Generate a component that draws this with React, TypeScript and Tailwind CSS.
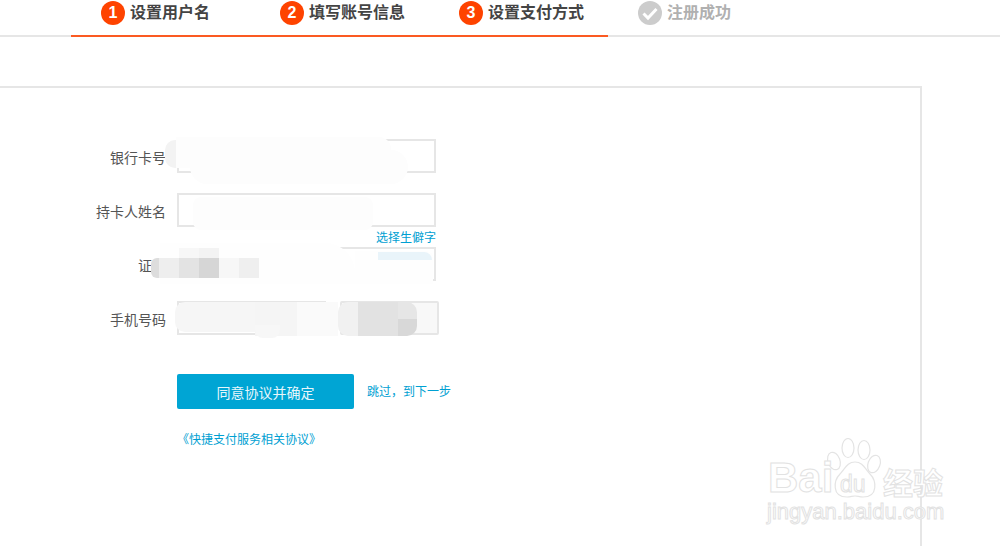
const steps = [
  { num: '1', label: '设置用户名', done: true },
  { num: '2', label: '填写账号信息', done: true },
  { num: '3', label: '设置支付方式', done: true },
  { num: '', label: '注册成功', done: false },
];

function StepItem({ num, label, done }: { num: string; label: string; done: boolean }) {
  return (
    <div className="flex h-[26px] w-[179px] items-center pl-[30px]">
      {done ? (
        <span className="flex h-6 w-6 items-center justify-center rounded-full bg-[#fe4300] font-['Liberation_Sans',sans-serif] text-base font-bold text-white">
          {num}
        </span>
      ) : (
        <svg className="h-6 w-6" viewBox="0 0 24 24">
          <circle cx="12" cy="12" r="12" fill="#cccccc" />
          <path d="M5.5 12.5l4.5 4.5 8.5-9" fill="none" stroke="#ffffff" strokeWidth="3" />
        </svg>
      )}
      <span className={`mb-[4px] ml-[5px] text-base font-bold leading-6 ${done ? 'text-[#444444]' : 'text-[#b0b0b0]'}`}>{label}</span>
    </div>
  );
}

function Row({ label, labelPad, children }: { label: string; labelPad?: string; children: React.ReactNode }) {
  return (
    <div className="flex h-[34px] items-center">
      <label className={`mt-[1px] w-[166px] text-right text-sm text-[#555555] ${labelPad ?? ''}`}>{label}</label>
      <div className="ml-[11px] flex h-full gap-[14px]">{children}</div>
    </div>
  );
}

const inputCls = 'h-full border-2 border-[#e6e6e6] bg-white';

// brushed-out areas over the form
function Smudges() {
  return (
    <>
      <div className="absolute left-[165px] top-[140px] h-[28px] w-[20px] rounded-l-[10px] bg-[#f3f3f3]" />
      <div className="absolute left-[176px] top-[137px] h-[31px] w-[215px] rounded-tr-[12px] bg-[#fdfdfd]" />
      <div className="absolute left-[190px] top-[150px] h-[34px] w-[218px] rounded-b-[20px] rounded-tr-[20px] bg-[#fdfdfd]" />
      <div className="absolute left-[193px] top-[197px] h-[33px] w-[180px] rounded-[8px] bg-[#fdfdfd]" />
      <div className="absolute left-[160px] top-[243px] h-[41px] w-[195px] rounded-tr-[30px] bg-[#fefefe]" />
      <div className="absolute left-[355px] top-[251px] h-[33px] w-[78px] rounded-tr-[8px] bg-[#fefefe]" />
      <div className="absolute left-[378px] top-[252px] h-[8px] w-[54px] rounded-tr-[8px] bg-[#e9f4fa]" />

      {/* pixelated strip, id row */}
      <div className="absolute left-[151px] top-[248px] flex flex-col">
        <div className="ml-[28px] flex h-[10px]">
          <div className="w-5 bg-[#f7f7f7]" />
          <div className="w-5 bg-[#f3f3f3]" />
        </div>
        <div className="flex h-5">
          <div className="w-2 rounded-l-[6px] bg-[#dddddd]" />
          <div className="w-5 bg-[#eeeeee]" />
          <div className="w-5 bg-[#e3e3e3]" />
          <div className="w-5 bg-[#d6d6d6]" />
          <div className="w-5 bg-[#f7f7f7]" />
          <div className="w-5 bg-[#efefef]" />
        </div>
      </div>

      {/* phone row */}
      <div className="absolute left-[175px] top-[302px] flex h-[34px]">
        <div className="h-[30px] w-[80px] rounded-l-[10px] bg-[#f6f6f6]" />
        <div className="w-[42px] bg-[#f5f5f5]" />
        <div className="w-[41px] bg-[#fafafa]" />
        <div className="flex w-[79px] overflow-hidden rounded-[10px]">
          <div className="w-5 bg-[#f1f1f1]" />
          <div className="w-10 bg-[#e2e2e2]" />
          <div className="flex w-[19px] flex-col">
            <div className="flex-1 bg-[#e6e6e6]" />
            <div className="flex-1 bg-[#d8d8d8]" />
          </div>
        </div>
      </div>
      <div className="absolute left-[255px] top-[325px] h-[13px] w-[25px] rounded-b-[8px] bg-[#f7f7f7]" />
    </>
  );
}

function Watermark() {
  const outline = 'text-white [-webkit-text-stroke:1px_#e2e2e2]';
  return (
    <div className="pointer-events-none absolute left-[760px] top-[436px] h-[92px] w-[195px]">
      <svg className="absolute left-[65px] top-[2px] h-[60px] w-[60px]" viewBox="0 0 60 60" fill="#ffffff" stroke="#e4e4e4" strokeWidth="1.2">
        <ellipse cx="9" cy="23" rx="6" ry="9" transform="rotate(-20 9 23)" />
        <ellipse cx="23" cy="10" rx="6" ry="9.5" />
        <ellipse cx="39" cy="12" rx="6" ry="9.5" />
        <ellipse cx="49" cy="26" rx="6" ry="9" transform="rotate(20 49 26)" />
        <path d="M30 24c8 0 10 7 15 12 6 6 9 23-7 23-4 0-5-1-8-1s-4 1-8 1c-16 0-13-17-7-23 5-5 7-12 15-12z" />
      </svg>
      <span className={`absolute left-[8px] top-[18px] font-['Liberation_Sans',sans-serif] text-[42px] font-bold leading-[48px] ${outline}`}>Bai</span>
      <span className={`absolute left-[80px] top-[36px] font-['Liberation_Sans',sans-serif] text-[23px] leading-[24px] ${outline}`}>du</span>
      <span className={`absolute left-[123px] top-[27px] text-[30px] font-bold leading-[36px] ${outline}`}>经验</span>
      <span className={`absolute left-[7px] top-[64px] font-['Liberation_Sans',sans-serif] text-[22px] leading-[24px] ${outline}`}>jingyan.baidu.com</span>
    </div>
  );
}

export default function App() {
  return (
    <div className="relative h-[546px] w-[1000px] overflow-hidden bg-white font-['Noto_Sans_CJK_SC',sans-serif]">
      {/* Steps */}
      <div className="h-[37px] border-b-2 border-[#e6e6e6] pl-[71px]">
        <div className="flex w-[716px] pb-[9px]">
          {steps.map((step) => (
            <StepItem key={step.label} {...step} />
          ))}
        </div>
        <div className="h-[2px] w-[537px] bg-[#fb5a22]" />
      </div>

      {/* Form panel */}
      <div className="-ml-[2px] mt-[49px] h-[520px] w-[924px] border-2 border-[#e6e6e6] pt-[51px]">
        <Row label="银行卡号">
          <div className={`${inputCls} w-[259px]`} />
        </Row>
        <div className="mt-5">
          <Row label="持卡人姓名">
            <div className={`${inputCls} w-[259px]`} />
          </Row>
        </div>
        <div className="relative z-10 ml-[376px] flex h-5 w-[60px] items-center pb-[1px] text-xs text-[#00a0d2]">选择生僻字</div>
        <Row label="证" labelPad="pr-[14px]">
          <div className={`${inputCls} w-[259px]`} />
        </Row>
        <div className="mt-5">
          <Row label="手机号码">
            <div className={`${inputCls} w-[149px]`} />
            <div className="h-full w-[99px] rounded-[2px] border-2 border-[#e6e6e6] bg-[#f8f8f8]" />
          </Row>
        </div>
        <div className="ml-[177px] mt-[39px] flex items-center">
          <button className="h-[35px] w-[177px] rounded-[2px] bg-[#00a5d4] pt-[1px] text-sm text-[#e6f6fb]">同意协议并确定</button>
          <a className="ml-[13px] mt-[-2px] text-xs text-[#00a0d2]">跳过，到下一步</a>
        </div>
        <a className="ml-[177px] mt-[21px] block text-xs leading-[18px] text-[#00a0d2]">《快捷支付服务相关协议》</a>
      </div>

      <Smudges />
      <Watermark />
    </div>
  );
}
